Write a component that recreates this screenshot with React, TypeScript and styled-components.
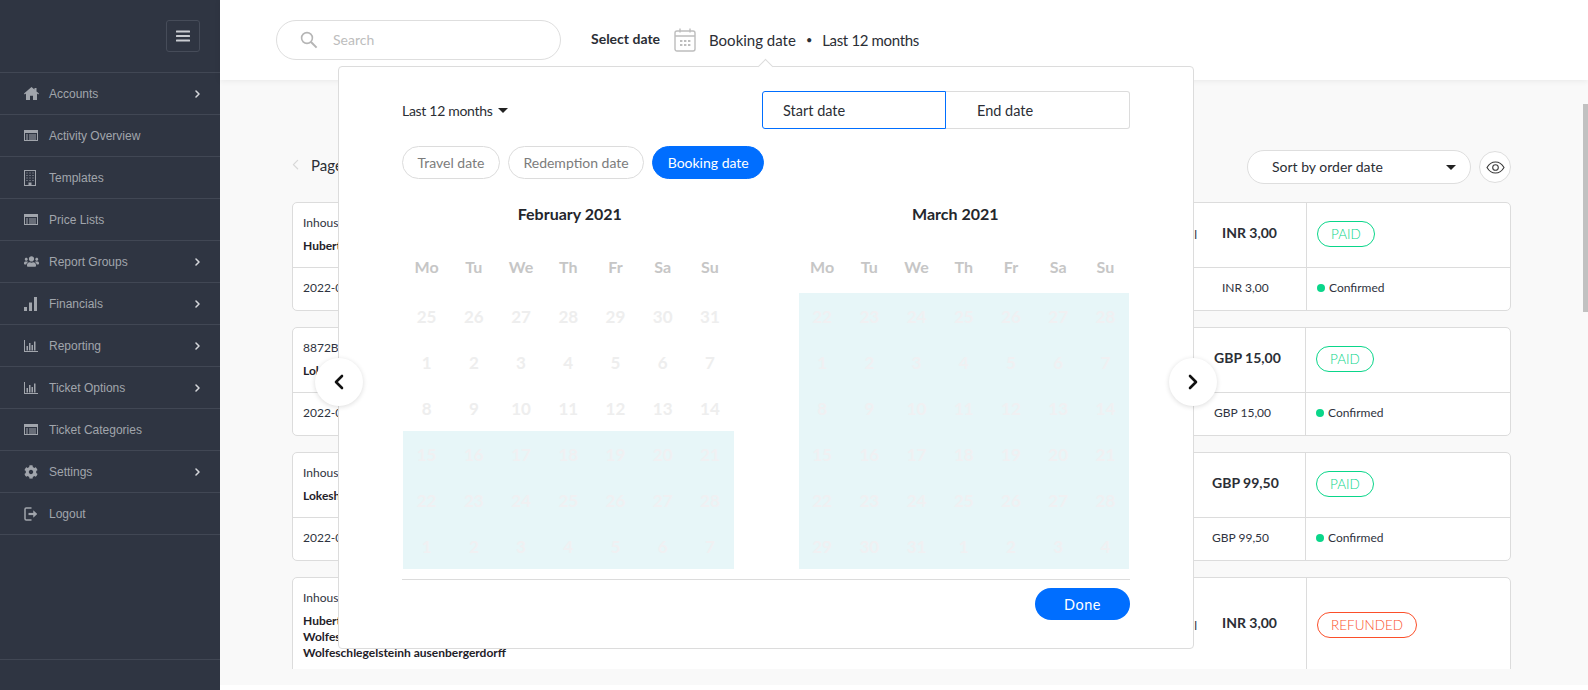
import React from 'react';
import styled, { createGlobalStyle } from 'styled-components';
import { FaUsers, FaCog } from 'react-icons/fa';

const GlobalStyle = createGlobalStyle`
  html, body {
    margin: 0;
    padding: 0;
    height: 100%;
    overflow: hidden;
    background: #fff;
    font-family: 'Lato', 'Liberation Sans', sans-serif;
    color: #2b2e35;
  }
  * {
    box-sizing: border-box;
  }
`;

const HomeIcon = () => (
  <svg width="15" height="13" viewBox="0 0 15 13" fill="currentColor">
    <path d="M7.500 0 0 6.600l.8.900L2 6.500V13h4V8.800h3V13h4V6.500l1.200 1 .8-.9L12.500 4.400V1h-2v1.600z" />
  </svg>
);

const ListIcon = () => (
  <svg width="14" height="11" viewBox="0 0 14 11" fill="none">
    <rect x="0.5" y="0.5" width="13" height="10" stroke="currentColor" />
    <rect x="0.5" y="0.5" width="13" height="2.500" fill="currentColor" />
    <path d="M2 5h2M5 5h7M2 7h2M5 7h7M2 9h2M5 9h7" stroke="currentColor" />
  </svg>
);

const BuildingIcon = () => (
  <svg width="12" height="16" viewBox="0 0 12 16" fill="none">
    <rect x="0.5" y="0.5" width="11" height="15" stroke="currentColor" />
    <path
      d="M2.500 3h1M5.500 3h1M8.500 3h1M2.500 5.500h1M5.500 5.500h1M8.500 5.500h1M2.500 8h1M5.500 8h1M8.500 8h1M2.500 10.500h1M5.500 10.500h1M8.500 10.500h1"
      stroke="currentColor"
    />
    <rect x="4.500" y="12.500" width="3" height="3" fill="currentColor" />
  </svg>
);

const SignalIcon = () => (
  <svg width="13" height="14" viewBox="0 0 13 14" fill="currentColor">
    <rect x="0" y="10" width="3" height="4" />
    <rect x="5" y="5.500" width="3" height="8.500" />
    <rect x="10" y="0" width="3" height="14" />
  </svg>
);

const BarsIcon = () => (
  <svg width="14" height="12" viewBox="0 0 14 12" fill="currentColor">
    <rect x="0" y="0" width="1" height="12" />
    <rect x="0" y="11" width="14" height="1" />
    <rect x="2.500" y="6" width="1.500" height="4.500" />
    <rect x="5" y="3" width="1.500" height="7.500" />
    <rect x="7.500" y="5" width="1.500" height="5.500" />
    <rect x="10" y="1.500" width="1.500" height="9" />
  </svg>
);

const LogoutIcon = () => (
  <svg width="14" height="14" viewBox="0 0 14 14" fill="none" stroke="currentColor">
    <path d="M7.500 1H2.200C1.500 1 1 1.500 1 2.200v9.600c0 .7.5 1.200 1.200 1.200h5.300" strokeWidth="1.500" />
    <path d="M4.500 7h6" strokeWidth="2.200" />
    <path d="M9.500 3.800 13 7l-3.500 3.200z" fill="currentColor" strokeWidth="0.5" />
  </svg>
);

const Chevron = ({ size = 8, color = 'currentColor', width = 2, flip = false }: { size?: number; color?: string; width?: number; flip?: boolean }) => (
  <svg width={size} height={size * 1.6} viewBox="0 0 10 16" fill="none">
    <path d={flip ? 'M8 2 2 8l6 6' : 'M2 2l6 6-6 6'} stroke={color} strokeWidth={width} strokeLinecap="round" strokeLinejoin="round" />
  </svg>
);

const navItems = [
  { label: 'Accounts', icon: <HomeIcon />, more: true },
  { label: 'Activity Overview', icon: <ListIcon /> },
  { label: 'Templates', icon: <BuildingIcon /> },
  { label: 'Price Lists', icon: <ListIcon /> },
  { label: 'Report Groups', icon: <FaUsers size={15} />, more: true },
  { label: 'Financials', icon: <SignalIcon />, more: true },
  { label: 'Reporting', icon: <BarsIcon />, more: true },
  { label: 'Ticket Options', icon: <BarsIcon />, more: true },
  { label: 'Ticket Categories', icon: <ListIcon /> },
  { label: 'Settings', icon: <FaCog size={14} />, more: true },
  { label: 'Logout', icon: <LogoutIcon /> },
];

const february = [
  25, 26, 27, 28, 29, 30, 31,
  1, 2, 3, 4, 5, 6, 7,
  8, 9, 10, 11, 12, 13, 14,
  15, 16, 17, 18, 19, 20, 21,
  22, 23, 24, 25, 26, 27, 28,
  1, 2, 3, 4, 5, 6, 7,
];

const march = [
  22, 23, 24, 25, 26, 27, 28,
  1, 2, 3, 4, 5, 6, 7,
  8, 9, 10, 11, 12, 13, 14,
  15, 16, 17, 18, 19, 20, 21,
  22, 23, 24, 25, 26, 27, 28,
  29, 30, 31, 1, 2, 3, 4,
];

const weekdays = ['Mo', 'Tu', 'We', 'Th', 'Fr', 'Sa', 'Su'];

const orders = [
  {
    ref: 'Inhouse Booking',
    names: ['Hubert Blaine'],
    date: '2022-03-14',
    amount: 'INR 3,00',
    inset: 9,
    status: 'PAID',
    channel: true,
    statusWidth: 204,
  },
  {
    ref: '8872B41C',
    names: ['Lokesh Kumar'],
    date: '2022-03-11',
    amount: 'GBP 15,00',
    inset: 2,
    status: 'PAID',
    statusWidth: 205,
  },
  {
    ref: 'Inhouse Booking',
    names: ['Lokesh Kumar'],
    date: '2022-03-09',
    amount: 'GBP 99,50',
    inset: 0,
    status: 'PAID',
    statusWidth: 205,
  },
  {
    ref: 'Inhouse Booking',
    names: ['Hubert Blaine', 'Wolfeschlegelsteinh', 'Wolfeschlegelsteinh ausenbergerdorff'],
    date: '2022-03-02',
    amount: 'INR 3,00',
    inset: 9,
    status: 'REFUNDED',
    channel: true,
    statusWidth: 204,
    tall: true,
  },
];

const App: React.FC = () => {
  return (
    <Page>
      <GlobalStyle />
      <Sidebar>
        <SidebarTop>
          <MenuButton>
            <svg width="14" height="12" viewBox="0 0 14 12" fill="#c9ccd1">
              <rect y="0.5" width="14" height="2" rx="0.5" />
              <rect y="5" width="14" height="2" rx="0.5" />
              <rect y="9.5" width="14" height="2" rx="0.5" />
            </svg>
          </MenuButton>
        </SidebarTop>
        <NavList>
          {navItems.map((item) => (
            <NavItem key={item.label}>
              <NavIcon>{item.icon}</NavIcon>
              <NavLabel>{item.label}</NavLabel>
              {item.more && (
                <NavMore>
                  <Chevron size={5} color="#d5d7db" width={3} />
                </NavMore>
              )}
            </NavItem>
          ))}
        </NavList>
        <SidebarFooter />
      </Sidebar>

      <Main>
        <TopBar>
          <SearchBox>
            <svg width="18" height="18" viewBox="0 0 18 18" fill="none" stroke="#b5b5b5" strokeWidth="1.6">
              <circle cx="7" cy="7" r="5.400" />
              <path d="M11 11l5.600 5.600" strokeWidth="2" />
            </svg>
            <SearchText>Search</SearchText>
          </SearchBox>
          <DateLabel>Select date</DateLabel>
          <svg width="22" height="24" viewBox="0 0 22 24" fill="none" stroke="#bdbdbd" strokeWidth="1.4">
            <rect x="1" y="3" width="20" height="20" rx="2" />
            <path d="M1 8h20M6 0.500v4M16 0.500v4" />
            <path d="M6 13h2.400M10 13h2.400M14 13h2.400M6 17h2.400M10 17h2.400M14 17h2.400" strokeWidth="2.200" />
          </svg>
          <DateSummary>Booking date</DateSummary>
          <DateDot>•</DateDot>
          <DateSummary $tight>Last 12 months</DateSummary>
        </TopBar>

        <Body>
          <BodyInner>
            <Toolbar>
              <Pager>
                <Chevron size={7} color="#d8d8d8" width={1.8} flip />
                <PagerText>Page 1 of 24</PagerText>
              </Pager>
              <ToolbarRight>
                <SortSelect>
                  <SortLabel>Sort by order date</SortLabel>
                  <Caret $size={5} />
                </SortSelect>
                <EyeButton>
                  <svg width="19" height="13" viewBox="0 0 19 13" fill="none" stroke="#3a3a3a" strokeWidth="1.100">
                    <path d="M1 6.500C3 3 6 1 9.500 1S16 3 18 6.500C16 10 13 12 9.500 12S3 10 1 6.500Z" />
                    <circle cx="9.500" cy="6.500" r="2.800" />
                  </svg>
                </EyeButton>
              </ToolbarRight>
            </Toolbar>

            <CardList>
              {orders.map((order, index) => (
                <OrderCard key={index}>
                  <CardRow $statusWidth={order.statusWidth}>
                    <MainCell $tall={order.tall}>
                      <div>
                        <RefText>{order.ref}</RefText>
                        {order.names.map((name) => (
                          <NameText key={name}>{name}</NameText>
                        ))}
                      </div>
                      {order.channel && <ChannelText $tall={order.tall}>Inhouse portal</ChannelText>}
                    </MainCell>
                    <AmountCell $inset={order.inset} $tall={order.tall}>
                      {order.amount}
                    </AmountCell>
                    <StatusCell $tall={order.tall}>
                      <StatusBadge $refunded={order.status === 'REFUNDED'}>{order.status}</StatusBadge>
                    </StatusCell>
                  </CardRow>
                  {!order.tall && (
                    <CardFooter $statusWidth={order.statusWidth}>
                      <FooterCell>{order.date}</FooterCell>
                      <FooterAmount $inset={order.inset}>{order.amount}</FooterAmount>
                      <FooterStatus>
                        <GreenDot />
                        Confirmed
                      </FooterStatus>
                    </CardFooter>
                  )}
                </OrderCard>
              ))}
            </CardList>
          </BodyInner>
        </Body>
        <ScrollThumb />
      </Main>

      <Popover>
        <PopoverArrow />
        <PopoverHead>
          <RangeSelect>
            Last 12 months
            <Caret $size={5} />
          </RangeSelect>
          <DateFields>
            <StartField>Start date</StartField>
            <EndField>End date</EndField>
          </DateFields>
        </PopoverHead>
        <PillRow>
          <Pill>Travel date</Pill>
          <Pill>Redemption date</Pill>
          <Pill $active>Booking date</Pill>
        </PillRow>
        <Months>
          <Month>
            <MonthTitle $shiftLeft={3}>February 2021</MonthTitle>
            <DayGrid>
              {weekdays.map((day) => (
                <Weekday key={day}>{day}</Weekday>
              ))}
              {february.map((day, index) => (
                <DayCell key={index} $inRange={index >= 21}>
                  {day}
                </DayCell>
              ))}
            </DayGrid>
          </Month>
          <Month>
            <MonthTitle $shiftRight={17}>March 2021</MonthTitle>
            <DayGrid>
              {weekdays.map((day) => (
                <Weekday key={day}>{day}</Weekday>
              ))}
              {march.map((day, index) => (
                <DayCell key={index} $inRange>
                  {day}
                </DayCell>
              ))}
            </DayGrid>
          </Month>
        </Months>
        <PopoverFooter>
          <DoneButton>Done</DoneButton>
        </PopoverFooter>
        <RoundNav $side="left">
          <Chevron size={10} color="#111" width={2.600} flip />
        </RoundNav>
        <RoundNav $side="right">
          <Chevron size={10} color="#111" width={2.600} />
        </RoundNav>
      </Popover>
    </Page>
  );
};

const Page = styled.div`
  position: relative;
  display: flex;
  width: 1588px;
  height: 690px;
  overflow: hidden;
`;

const Sidebar = styled.aside`
  width: 220px;
  flex-shrink: 0;
  display: flex;
  flex-direction: column;
  background: #2f3542;
  font-family: 'Liberation Sans', Arial, sans-serif;
`;

const SidebarTop = styled.div`
  height: 72px;
  padding: 20px 20px 0 0;
  display: flex;
  justify-content: flex-end;
  align-items: flex-start;
`;

const MenuButton = styled.div`
  width: 34px;
  height: 32px;
  border: 1px solid #464c59;
  border-radius: 3px;
  display: flex;
  align-items: center;
  justify-content: center;
`;

const NavList = styled.nav`
  border-top: 1px solid #414754;
`;

const NavItem = styled.div`
  height: 42px;
  padding: 0 20px 0 24px;
  display: flex;
  align-items: center;
  border-bottom: 1px solid #414754;
  color: #a1a5ac;
`;

const NavIcon = styled.span`
  width: 25px;
  display: flex;
  align-items: center;
`;

const NavLabel = styled.span`
  flex: 1;
  font-size: 12px;
`;

const NavMore = styled.span`
  display: flex;
  align-items: center;
`;

const SidebarFooter = styled.div`
  margin-top: auto;
  height: 31px;
  border-top: 1px solid #414754;
`;

const Main = styled.main`
  position: relative;
  flex: 1;
  min-width: 0;
  display: flex;
  flex-direction: column;
  background: #fff;
`;

const TopBar = styled.header`
  position: relative;
  z-index: 1;
  height: 80px;
  padding-left: 56px;
  padding-bottom: 1px;
  display: flex;
  align-items: center;
  background: #fff;
  box-shadow: 0 1px 6px rgba(0, 0, 0, 0.07);
`;

const SearchBox = styled.div`
  width: 285px;
  height: 40px;
  padding-left: 23px;
  display: flex;
  align-items: center;
  gap: 15px;
  border: 1px solid #dedede;
  border-radius: 20px;
  margin-right: 30px;
`;

const SearchText = styled.span`
  font-size: 14px;
  color: #bdbdbd;
`;

const DateLabel = styled.span`
  font-size: 14px;
  font-weight: 700;
  margin-right: 14px;
  margin-bottom: 2px;
`;

const DateSummary = styled.span<{ $tight?: boolean }>`
  font-size: 15px;
  letter-spacing: ${(p) => (p.$tight ? '-0.35px' : '0')};
  svg + & {
    margin-left: 13px;
  }
`;

const DateDot = styled.span`
  margin: 0 10px;
  font-size: 11px;
`;

const Body = styled.div`
  height: 605px;
  padding-bottom: 16px;
  background: #f9f9f9;
`;

const BodyInner = styled.div`
  height: 100%;
  overflow: hidden;
  padding: 70px 77px 0 72px;
`;

const Toolbar = styled.div`
  height: 34px;
  margin-bottom: 18px;
  display: flex;
  align-items: center;
  justify-content: space-between;
`;

const Pager = styled.div`
  margin-bottom: 4px;
  display: flex;
  align-items: center;
  gap: 12px;
`;

const PagerText = styled.span`
  font-size: 15px;
`;

const ToolbarRight = styled.div`
  display: flex;
  align-items: center;
  gap: 8px;
`;

const SortSelect = styled.div`
  width: 224px;
  height: 34px;
  padding: 0 14px 0 24px;
  display: flex;
  align-items: center;
  justify-content: space-between;
  font-size: 14px;
  background: #fff;
  border: 1px solid #dedede;
  border-radius: 17px;
`;

const SortLabel = styled.span`
  margin-bottom: 2px;
`;

const Caret = styled.span<{ $size: number }>`
  width: 0;
  height: 0;
  border-left: ${(p) => p.$size}px solid transparent;
  border-right: ${(p) => p.$size}px solid transparent;
  border-top: ${(p) => p.$size}px solid #222;
`;

const EyeButton = styled.div`
  width: 32px;
  height: 32px;
  display: flex;
  align-items: center;
  justify-content: center;
  background: #fff;
  border: 1px solid #dedede;
  border-radius: 50%;
`;

const CardList = styled.div`
  display: flex;
  flex-direction: column;
  gap: 16px;
`;

const OrderCard = styled.article`
  background: #fff;
  border: 1px solid #dcdcdc;
  border-radius: 5px;
  flex-shrink: 0;
`;

const CardRow = styled.div<{ $statusWidth: number }>`
  display: grid;
  grid-template-columns: 1fr 93px ${(p) => p.$statusWidth}px;
  min-height: 65px;
  border-bottom: 1px solid #dcdcdc;
`;

const MainCell = styled.div<{ $tall?: boolean }>`
  padding: 13px 16px ${(p) => (p.$tall ? 40 : 0)}px 10px;
  display: flex;
  justify-content: space-between;
  font-size: 12px;
`;

const RefText = styled.div`
  height: 14px;
  line-height: 14px;
  margin-bottom: 8px;
  color: #2f3340;
`;

const NameText = styled.div`
  line-height: 16px;
  font-weight: 700;
  color: #1f2229;
`;

const ChannelText = styled.div<{ $tall?: boolean }>`
  padding-top: ${(p) => (p.$tall ? 27 : 11)}px;
  color: #2f3340;
`;

const AmountCell = styled.div<{ $inset: number; $tall?: boolean }>`
  padding-left: ${(p) => p.$inset}px;
  padding-top: ${(p) => (p.$tall ? 36 : 21)}px;
  font-size: 14px;
  font-weight: 700;
  white-space: nowrap;
`;

const StatusCell = styled.div<{ $tall?: boolean }>`
  padding: ${(p) => (p.$tall ? 34 : 18)}px 0 0 10px;
  border-left: 1px solid #dcdcdc;
`;

const StatusBadge = styled.span<{ $refunded?: boolean }>`
  display: inline-flex;
  align-items: center;
  height: 26px;
  padding: 0 13px;
  font-size: 13.5px;
  font-weight: 300;
  border-radius: 13px;
  color: ${(p) => (p.$refunded ? '#fb4f2a' : '#0ad68a')};
  border: 1px solid ${(p) => (p.$refunded ? '#fb4f2a' : '#0ad68a')};
`;

const CardFooter = styled.div<{ $statusWidth: number }>`
  display: grid;
  grid-template-columns: 1fr 93px ${(p) => p.$statusWidth}px;
  height: 42px;
  align-items: center;
  font-size: 12px;
  color: #2f3340;
`;

const FooterCell = styled.div`
  padding: 0 0 3px 10px;
`;

const FooterAmount = styled.div<{ $inset: number }>`
  padding: 0 0 3px ${(p) => p.$inset}px;
`;

const FooterStatus = styled.div`
  height: 100%;
  padding: 0 0 3px 10px;
  display: flex;
  align-items: center;
  gap: 4px;
  border-left: 1px solid #dcdcdc;
`;

const GreenDot = styled.span`
  width: 8px;
  height: 8px;
  border-radius: 50%;
  background: #0ad68a;
`;

const ScrollThumb = styled.div`
  position: absolute;
  right: 0;
  top: 104px;
  width: 5px;
  height: 208px;
  background: #c1c1c1;
`;

const Popover = styled.section`
  position: absolute;
  z-index: 2;
  left: 338px;
  top: 66px;
  width: 856px;
  height: 583px;
  padding: 24px 63px 0;
  background: #fff;
  border: 1px solid #dcdcdc;
  border-radius: 4px;
`;

const PopoverArrow = styled.div`
  position: absolute;
  top: -6px;
  left: 421px;
  width: 11px;
  height: 11px;
  background: #fff;
  border-top: 1px solid #dcdcdc;
  border-left: 1px solid #dcdcdc;
  transform: rotate(45deg);
`;

const PopoverHead = styled.div`
  display: flex;
  align-items: center;
  justify-content: space-between;
`;

const RangeSelect = styled.div`
  display: flex;
  align-items: center;
  gap: 5px;
  font-size: 14px;
  letter-spacing: -0.3px;
`;

const DateFields = styled.div`
  display: flex;
  width: 368px;
  height: 38px;
  font-size: 14.500px;
`;

const StartField = styled.div`
  width: 184px;
  padding-left: 20px;
  display: flex;
  align-items: center;
  border: 1px solid #006eff;
  border-radius: 3px 0 0 3px;
`;

const EndField = styled.div`
  flex: 1;
  padding-left: 31px;
  display: flex;
  align-items: center;
  border: 1px solid #dcdcdc;
  border-left: none;
  border-radius: 0 3px 3px 0;
`;

const PillRow = styled.div`
  margin-top: 17px;
  display: flex;
  gap: 8px;
`;

const Pill = styled.div<{ $active?: boolean }>`
  height: 33px;
  padding: 0 14.500px;
  display: flex;
  align-items: center;
  font-size: 14px;
  border-radius: 17px;
  color: ${(p) => (p.$active ? '#fff' : '#7c7c7c')};
  background: ${(p) => (p.$active ? '#006eff' : '#fff')};
  border: 1px solid ${(p) => (p.$active ? '#006eff' : '#dcdcdc')};
`;

const Months = styled.div`
  padding: 0 1px;
  display: flex;
  justify-content: space-between;
`;

const Month = styled.div`
  width: 330.500px;
`;

const MonthTitle = styled.div<{ $shiftLeft?: number; $shiftRight?: number }>`
  height: 45px;
  padding: 24px ${(p) => p.$shiftRight ?? 0}px 0 ${(p) => p.$shiftLeft ?? 0}px;
  text-align: center;
  font-size: 16px;
  line-height: 22px;
  font-weight: 700;
  color: #24262c;
`;

const DayGrid = styled.div`
  margin-top: 23px;
  display: grid;
  grid-template-columns: repeat(7, 1fr);
  grid-auto-rows: 46px;
`;

const Weekday = styled.div`
  padding-bottom: 8px;
  display: flex;
  align-items: center;
  justify-content: center;
  font-size: 16px;
  font-weight: 700;
  color: #c6c6c6;
`;

const DayCell = styled.div<{ $inRange?: boolean }>`
  display: flex;
  align-items: center;
  justify-content: center;
  font-size: 17px;
  font-weight: 700;
  color: ${(p) => (p.$inRange ? '#f0f0f2' : '#eeeeee')};
  background: ${(p) => (p.$inRange ? '#e7f6f8' : 'transparent')};
`;

const PopoverFooter = styled.div`
  margin-top: 10px;
  padding-top: 8px;
  display: flex;
  justify-content: flex-end;
  border-top: 1px solid #dcdcdc;
`;

const DoneButton = styled.div`
  width: 95px;
  height: 32px;
  display: flex;
  align-items: center;
  justify-content: center;
  font-size: 14.500px;
  letter-spacing: 0.5px;
  color: #fff;
  background: #006eff;
  border-radius: 16px;
`;

const RoundNav = styled.div<{ $side: 'left' | 'right' }>`
  position: absolute;
  top: 291px;
  ${(p) => p.$side}: -24px;
  width: 48px;
  height: 48px;
  display: flex;
  align-items: center;
  justify-content: center;
  background: #fff;
  border-radius: 50%;
  box-shadow: 0 1px 5px rgba(0, 0, 0, 0.14);
`;

export default App;
